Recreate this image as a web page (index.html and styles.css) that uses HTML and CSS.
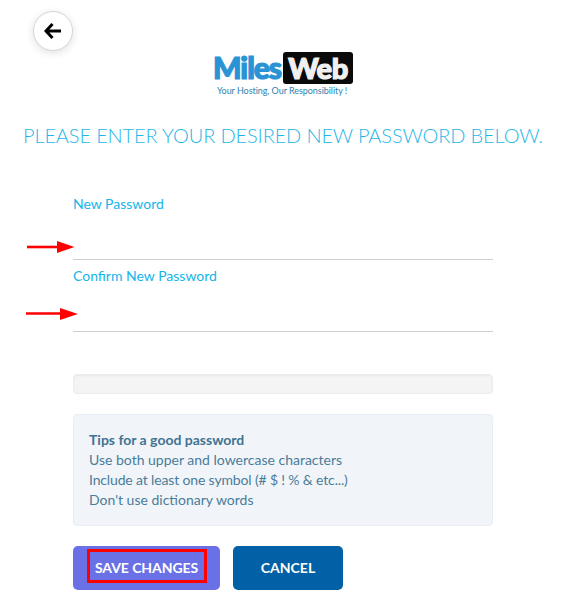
FILE: index.html
```html
<!DOCTYPE html>
<html lang="en">
<head>
<meta charset="utf-8">
<title>Change password</title>
<link rel="stylesheet" href="styles.css">
</head>
<body>
<div class="page">
  <header class="top">
    <button class="back" type="button" aria-label="Back">
      <svg width="18" height="16" viewBox="0 0 18 16"><path d="M8.500 1 2 8 8.500 15M2.500 8H17" fill="none" stroke="#000" stroke-width="3"/></svg>
    </button>
  </header>
  <div class="logo">
    <div class="logo-main"><span class="miles">Miles</span><span class="web">Web</span></div>
    <div class="tagline">Your Hosting, Our Responsibility !</div>
  </div>
  <h1 class="title">PLEASE ENTER YOUR DESIRED NEW PASSWORD BELOW.</h1>
  <form class="form">
    <label class="label">New Password</label>
    <div class="input first">
      <svg class="arrow arrow-a" width="48" height="14" viewBox="0 0 48 14"><path d="M0 7h31" stroke="#f00" stroke-width="2.600"/><path d="M30 1 47.500 7 30 13z" fill="#f00"/></svg>
    </div>
    <label class="label second">Confirm New Password</label>
    <div class="input">
      <svg class="arrow arrow-b" width="52" height="14" viewBox="0 0 52 14"><path d="M0 6.500h35" stroke="#f00" stroke-width="2.600"/><path d="M34 1 52 7 34 13z" fill="#f00"/></svg>
    </div>
    <div class="meter"></div>
    <div class="tips">
      <strong>Tips for a good password</strong>
      <span>Use both upper and lowercase characters</span>
      <span class="tight">Include at least one symbol (# $ ! % &amp; etc...)</span>
      <span>Don't use dictionary words</span>
    </div>
    <div class="actions">
      <button class="btn save" type="button"><span class="mark">SAVE CHANGES</span></button>
      <button class="btn cancel" type="button">CANCEL</button>
    </div>
  </form>
</div>
</body>
</html>
```
FILE: styles.css
```css
* { box-sizing: border-box; }
html, body { margin: 0; background: #fff; }
body { font-family: Lato, "Open Sans", sans-serif; }
.page { width: 567px; height: 615px; overflow: hidden; }
.top { height: 52px; padding: 11px 0 0 33px; }
.back {
  width: 40px; height: 40px; padding: 0; border-radius: 50%;
  border: 1px solid #d6d6d6; background: #fff;
  box-shadow: 0 2px 8px rgba(0,0,0,.12);
  display: flex; align-items: center; justify-content: center;
}
.logo { width: 140px; height: 44px; margin-left: 213px; }
.logo-main { display: flex; align-items: flex-start; height: 32px; }
.miles { width: 70px; font: 900 30px/29px Lato, sans-serif; letter-spacing: -1px; color: #2a93d5; -webkit-text-stroke: 1.200px #2a93d5; padding-top: 1px; }
.web { width: 70px; height: 32px; background: #0a0a0a; border-radius: 3px; color: #f0f0f0; -webkit-text-stroke: 1.200px #f0f0f0; font: 900 29px/30px Lato, sans-serif; letter-spacing: -.4px; text-align: center; padding-top: 1px; }
.tagline { font: 9px/11px Lato, sans-serif; color: #2f83ad; margin: 1px 0 0 4px; white-space: nowrap; letter-spacing: -.05px; }
.title { margin: 26px 0 0 23px; font: 300 20px/26px Lato, sans-serif; color: #1fb6e8; white-space: nowrap; letter-spacing: -.14px; }
.form { margin: 47px 0 0 73px; width: 420px; }
.label { display: block; font: 14px/18px Lato, sans-serif; color: #13b5ea; }
.second { margin-top: 7px; }
.input { position: relative; height: 47px; border-bottom: 1px solid #cfcfcf; }
.arrow { position: absolute; }
.arrow-a { left: -46px; top: 27px; }
.arrow-b { left: -47px; top: 22px; }
.meter { height: 20px; margin-top: 42px; background: #f4f4f4; border: 1px solid #ececec; border-radius: 4px; box-shadow: inset 0 1px 2px rgba(0,0,0,.05); }
.tips {
  height: 112px; margin-top: 20px; padding: 15px 15px; background: #f1f5f9;
  border: 1px solid #e9eef4; border-radius: 4px;
  display: flex; flex-direction: column;
  font: 14px/20px Lato, sans-serif; color: #4a7c99;
}
.tips strong { font-weight: 700; color: #3f7391; }
.tight { letter-spacing: -.15px; }
.actions { display: flex; gap: 13px; margin-top: 20px; }
.btn { height: 44px; padding: 0; border: 0; border-radius: 5px; color: #fff; font: 700 14px/20px Lato, sans-serif; display: flex; align-items: center; justify-content: center; }
.save { width: 147px; background: #6a71e6; }
.cancel { width: 110px; background: #0261a6; }
.mark { width: 120px; height: 34px; border: 3px solid #f00; display: flex; align-items: center; justify-content: center; margin-top: -4px; padding-top: 4px; letter-spacing: -.08px; }
```
